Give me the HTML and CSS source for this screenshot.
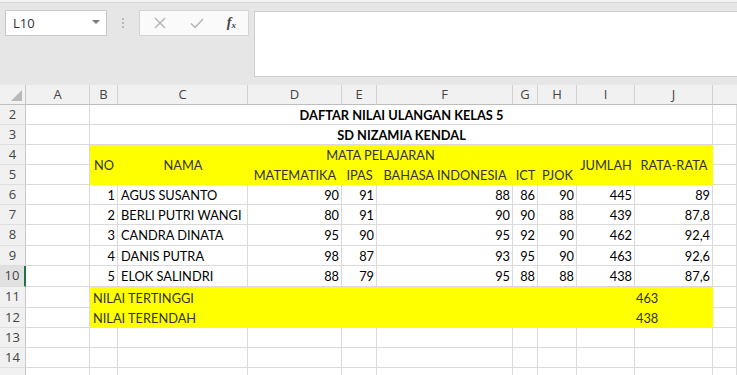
FILE: index.html
```html
<!DOCTYPE html>
<html lang="id">
<head>
  <meta charset="UTF-8">
  <meta name="viewport" content="width=device-width, initial-scale=1.0">
  <title>Daftar Nilai Ulangan Kelas 5</title>
  <link rel="stylesheet" href="styles.css">
</head>
<body>
  <!-- Formula bar -->
  <div class="topbar">
    <div class="namebox">
      <span>L10</span>
      <span class="caret"></span>
    </div>
    <div class="grip"><i></i><i></i><i></i></div>
    <div class="fbuttons">
      <svg class="ficon" width="14" height="14" viewBox="0 0 14 14"><path d="M2 2 L12 12 M12 2 L2 12" stroke="#b3b3b3" stroke-width="1.4" fill="none"/></svg>
      <svg class="ficon" width="16" height="14" viewBox="0 0 16 14"><path d="M2 7.5 L6 11.5 L14 3" stroke="#b3b3b3" stroke-width="1.4" fill="none"/></svg>
      <span class="fx">f<sub>x</sub></span>
    </div>
    <div class="formula"></div>
  </div>

  <!-- Sheet -->
  <div class="sheet">
    <div class="corner"><span class="tri"></span></div>
    <div class="colhdr">A</div>
    <div class="colhdr">B</div>
    <div class="colhdr">C</div>
    <div class="colhdr">D</div>
    <div class="colhdr">E</div>
    <div class="colhdr">F</div>
    <div class="colhdr">G</div>
    <div class="colhdr">H</div>
    <div class="colhdr">I</div>
    <div class="colhdr">J</div>
    <div class="colhdr last"></div>

    <div class="rowhdr">2</div>
    <div class="c"></div>
    <div class="c title span9">DAFTAR NILAI ULANGAN KELAS 5</div>
    <div class="c"></div>

    <div class="rowhdr">3</div>
    <div class="c"></div>
    <div class="c title span9">SD NIZAMIA KENDAL</div>
    <div class="c"></div>

    <div class="rowhdr">4</div>
    <div class="c"></div>
    <div class="y mid tall">NO</div>
    <div class="y mid tall">NAMA</div>
    <div class="y mid span3">MATA PELAJARAN</div>
    <div class="y"></div>
    <div class="y"></div>
    <div class="y mid tall">JUMLAH</div>
    <div class="y mid tall">RATA-RATA</div>
    <div class="c"></div>

    <div class="rowhdr">5</div>
    <div class="c"></div>
    <div class="y mid">MATEMATIKA</div>
    <div class="y mid">IPAS</div>
    <div class="y mid">BAHASA INDONESIA</div>
    <div class="y mid">ICT</div>
    <div class="y mid">PJOK</div>
    <div class="c"></div>

    <div class="rowhdr">6</div>
    <div class="c"></div>
    <div class="c num">1</div>
    <div class="c">AGUS SUSANTO</div>
    <div class="c num">90</div>
    <div class="c num">91</div>
    <div class="c num">88</div>
    <div class="c num">86</div>
    <div class="c num">90</div>
    <div class="c num">445</div>
    <div class="c num">89</div>
    <div class="c"></div>

    <div class="rowhdr">7</div>
    <div class="c"></div>
    <div class="c num">2</div>
    <div class="c">BERLI PUTRI WANGI</div>
    <div class="c num">80</div>
    <div class="c num">91</div>
    <div class="c num">90</div>
    <div class="c num">90</div>
    <div class="c num">88</div>
    <div class="c num">439</div>
    <div class="c num">87,8</div>
    <div class="c"></div>

    <div class="rowhdr">8</div>
    <div class="c"></div>
    <div class="c num">3</div>
    <div class="c">CANDRA DINATA</div>
    <div class="c num">95</div>
    <div class="c num">90</div>
    <div class="c num">95</div>
    <div class="c num">92</div>
    <div class="c num">90</div>
    <div class="c num">462</div>
    <div class="c num">92,4</div>
    <div class="c"></div>

    <div class="rowhdr">9</div>
    <div class="c"></div>
    <div class="c num">4</div>
    <div class="c">DANIS PUTRA</div>
    <div class="c num">98</div>
    <div class="c num">87</div>
    <div class="c num">93</div>
    <div class="c num">95</div>
    <div class="c num">90</div>
    <div class="c num">463</div>
    <div class="c num">92,6</div>
    <div class="c"></div>

    <div class="rowhdr active">10</div>
    <div class="c"></div>
    <div class="c num">5</div>
    <div class="c">ELOK SALINDRI</div>
    <div class="c num">88</div>
    <div class="c num">79</div>
    <div class="c num">95</div>
    <div class="c num">88</div>
    <div class="c num">88</div>
    <div class="c num">438</div>
    <div class="c num">87,6</div>
    <div class="c"></div>

    <div class="rowhdr">11</div>
    <div class="c"></div>
    <div class="y span8">NILAI TERTINGGI</div>
    <div class="y tight">463</div>
    <div class="c"></div>

    <div class="rowhdr">12</div>
    <div class="c"></div>
    <div class="y span8">NILAI TERENDAH</div>
    <div class="y tight">438</div>
    <div class="c"></div>

    <div class="rowhdr">13</div>
    <div class="c"></div><div class="c"></div><div class="c"></div><div class="c"></div><div class="c"></div><div class="c"></div>
    <div class="c"></div><div class="c"></div><div class="c"></div><div class="c"></div><div class="c"></div>

    <div class="rowhdr">14</div>
    <div class="c"></div><div class="c"></div><div class="c"></div><div class="c"></div><div class="c"></div><div class="c"></div>
    <div class="c"></div><div class="c"></div><div class="c"></div><div class="c"></div><div class="c"></div>

    <div class="rowhdr"></div>
    <div class="c"></div><div class="c"></div><div class="c"></div><div class="c"></div><div class="c"></div><div class="c"></div>
    <div class="c"></div><div class="c"></div><div class="c"></div><div class="c"></div><div class="c"></div>
  </div>
</body>
</html>
```

FILE: styles.css
```css
/* Basic Reset */
* { box-sizing: border-box; margin: 0; padding: 0; }

body {
  width: 737px;
  height: 375px;
  overflow: hidden;
  background: #e6e6e6;
  font-family: Lato, "Liberation Sans", sans-serif;
  color: #000;
}

/* Formula bar */
.topbar {
  height: 85px;
  display: flex;
  align-items: flex-start;
  padding: 8px 0 0 5px;
  border-top: 2px solid #f3f3f3;
  background: #e6e6e6;
  position: relative;
}
.topbar::before {
  content: "";
  position: absolute;
  left: 0; right: 0; top: 0;
  border-top: 1px solid #d9d9d9;
}

.namebox {
  width: 102px;
  height: 26px;
  background: #fff;
  border: 1px solid #c8c8c8;
  display: flex;
  align-items: center;
  justify-content: space-between;
  padding: 0 6px 0 7px;
  font-family: "Open Sans", sans-serif;
  font-size: 13px;
  color: #333;
}
.caret {
  width: 0; height: 0;
  border-left: 4px solid transparent;
  border-right: 4px solid transparent;
  border-top: 4px solid #7a7a7a;
  margin-top: -2px;
}

.grip {
  width: 32px;
  height: 26px;
  display: flex;
  flex-direction: column;
  align-items: center;
  justify-content: center;
  gap: 2px;
}
.grip i {
  display: block;
  width: 2px; height: 2px;
  background: #b9b9b9;
}

.fbuttons {
  width: 110px;
  height: 26px;
  background: #fafafa;
  border: 1px solid #d4d4d4;
  display: flex;
  align-items: center;
  justify-content: space-between;
  padding: 0 12px 0 13px;
}
.fx {
  font-family: "Liberation Serif", serif;
  font-style: italic;
  font-size: 14px;
  color: #444;
  font-weight: bold;
}
.fx sub { font-size: 9px; vertical-align: -1px; }

.formula {
  flex: 1;
  height: 66px;
  margin: 1px 0 0 5px;
  background: #fff;
  border: 1px solid #cfcfcf;
  border-right: none;
}

/* Sheet grid */
.sheet {
  display: grid;
  grid-template-columns: 26px 64px 28px 130px 94px 35px 136px 25px 39px 58px 78px 1fr;
  grid-template-rows: 20px 20px 20px 20px 20px 20px 20px 21px 20px 21px 21px 20px 20px 20px 20px;
  background: #fff;
  font-size: 12.8px;
  line-height: 20px;
}

.corner, .colhdr, .rowhdr {
  background: #f1f1f1;
  color: #444;
  font-family: "Open Sans", sans-serif;
  font-size: 13px;
}
.corner {
  border-right: 1px solid #c8c8c8;
  border-bottom: 1px solid #c0c0c0;
  position: relative;
}
.tri {
  position: absolute;
  right: 3px; bottom: 3px;
  width: 0; height: 0;
  border-left: 11px solid transparent;
  border-bottom: 11px solid #b8b8b8;
}
.colhdr {
  text-align: center;
  line-height: 19px;
  border-right: 1px solid #d2d2d2;
  border-bottom: 1px solid #bdbdbd;
}
.colhdr.last { border-right: none; }
.rowhdr {
  text-align: center;
  line-height: 19px;
  border-right: 1px solid #c8c8c8;
  border-bottom: 1px solid #dedede;
}
.rowhdr.active {
  background: #e1e1e1;
  border-right: 2px solid #217346;
}

/* Cells */
.c {
  border-right: 1px solid #dadada;
  border-bottom: 1px solid #dadada;
  padding: 0 2px 0 3px;
  white-space: nowrap;
  overflow: hidden;
}
.num { text-align: right; }
.title {
  text-align: center;
  font-weight: bold;
}
.span9 { grid-column: span 9; }
.span8 { grid-column: span 8; }
.span3 { grid-column: span 3; }
.tall { grid-row: span 2; }

/* Yellow fill */
.y {
  background: #ffff00;
  color: #333;
  padding: 0 3px;
  white-space: nowrap;
  display: flex;
  align-items: center;
}
.y.mid { justify-content: center; }
.y.tight { padding-left: 1px; }
```
